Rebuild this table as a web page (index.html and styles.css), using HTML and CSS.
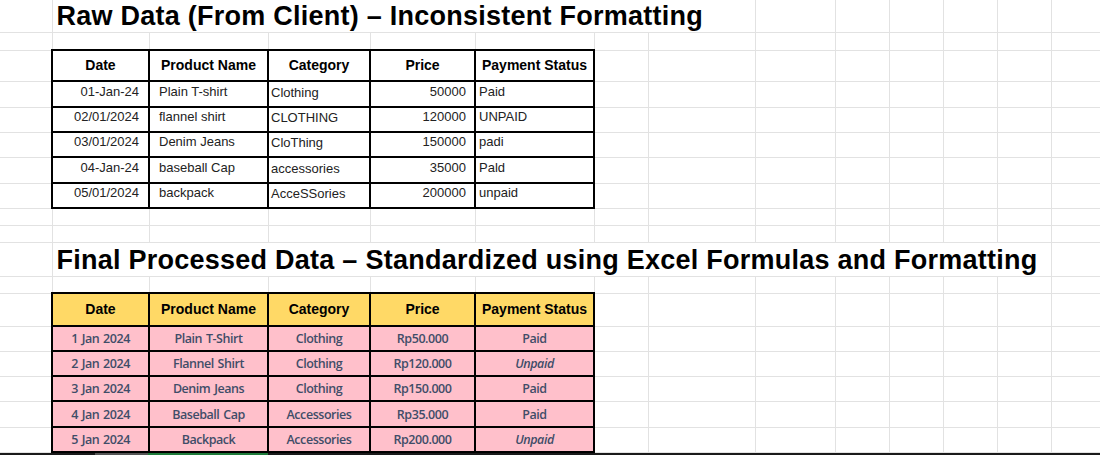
FILE: index.html
```html
<!DOCTYPE html>
<html>
<head>
<meta charset="utf-8">
<title>Sheet</title>
<link rel="stylesheet" href="styles.css">
</head>
<body>
<div class="sheet-wrap">
<table class="sheet">
<colgroup>
<col class="c-a"><col class="c-b"><col class="c-c"><col class="c-d"><col class="c-e"><col class="c-f"><col class="c-g"><col class="c-h"><col class="c-i"><col class="c-j"><col class="c-k"><col class="c-l"><col class="c-m"><col class="c-n">
</colgroup>
<tr class="h32"><td></td><td class="title" colspan="7">Raw Data (From Client) – Inconsistent Formatting</td><td></td><td></td><td></td><td></td><td></td><td></td></tr>
<tr class="h18"><td></td><td></td><td></td><td></td><td></td><td></td><td></td><td></td><td></td><td></td><td></td><td></td><td></td><td></td></tr>
<tr class="h31"><td></td><td class="raw-h">Date</td><td class="raw-h">Product Name</td><td class="raw-h">Category</td><td class="raw-h">Price</td><td class="raw-h">Payment Status</td><td></td><td></td><td></td><td></td><td></td><td></td><td></td><td></td></tr>
<tr class="h26"><td></td><td class="raw date">01-Jan-24</td><td class="raw prod">Plain T-shirt</td><td class="raw cat">Clothing</td><td class="raw price">50000</td><td class="raw pay">Paid</td><td></td><td></td><td></td><td></td><td></td><td></td><td></td><td></td></tr>
<tr class="h25"><td></td><td class="raw date">02/01/2024</td><td class="raw prod">flannel shirt</td><td class="raw cat">CLOTHING</td><td class="raw price">120000</td><td class="raw pay">UNPAID</td><td></td><td></td><td></td><td></td><td></td><td></td><td></td><td></td></tr>
<tr class="h25"><td></td><td class="raw date">03/01/2024</td><td class="raw prod">Denim Jeans</td><td class="raw cat">CloThing</td><td class="raw price">150000</td><td class="raw pay">padi</td><td></td><td></td><td></td><td></td><td></td><td></td><td></td><td></td></tr>
<tr class="h26"><td></td><td class="raw date">04-Jan-24</td><td class="raw prod">baseball Cap</td><td class="raw cat">accessories</td><td class="raw price">35000</td><td class="raw pay">Pald</td><td></td><td></td><td></td><td></td><td></td><td></td><td></td><td></td></tr>
<tr class="h25"><td></td><td class="raw date">05/01/2024</td><td class="raw prod">backpack</td><td class="raw cat">AcceSSories</td><td class="raw price">200000</td><td class="raw pay">unpaid</td><td></td><td></td><td></td><td></td><td></td><td></td><td></td><td></td></tr>
<tr class="h17"><td></td><td></td><td></td><td></td><td></td><td></td><td></td><td></td><td></td><td></td><td></td><td></td><td></td><td></td></tr>
<tr class="h17"><td></td><td></td><td></td><td></td><td></td><td></td><td></td><td></td><td></td><td></td><td></td><td></td><td></td><td></td></tr>
<tr class="h34"><td></td><td class="title" colspan="12">Final Processed Data – Standardized using Excel Formulas and Formatting</td><td></td></tr>
<tr class="h17"><td></td><td></td><td></td><td></td><td></td><td></td><td></td><td></td><td></td><td></td><td></td><td></td><td></td><td></td></tr>
<tr class="h33"><td></td><td class="fin-h">Date</td><td class="fin-h">Product Name</td><td class="fin-h">Category</td><td class="fin-h">Price</td><td class="fin-h">Payment Status</td><td></td><td></td><td></td><td></td><td></td><td></td><td></td><td></td></tr>
<tr class="h25"><td></td><td class="fin">1 Jan 2024</td><td class="fin">Plain T-Shirt</td><td class="fin">Clothing</td><td class="fin">Rp50.000</td><td class="fin">Paid</td><td></td><td></td><td></td><td></td><td></td><td></td><td></td><td></td></tr>
<tr class="h25"><td></td><td class="fin">2 Jan 2024</td><td class="fin">Flannel Shirt</td><td class="fin">Clothing</td><td class="fin">Rp120.000</td><td class="fin unpaid">Unpaid</td><td></td><td></td><td></td><td></td><td></td><td></td><td></td><td></td></tr>
<tr class="h25"><td></td><td class="fin">3 Jan 2024</td><td class="fin">Denim Jeans</td><td class="fin">Clothing</td><td class="fin">Rp150.000</td><td class="fin">Paid</td><td></td><td></td><td></td><td></td><td></td><td></td><td></td><td></td></tr>
<tr class="h26"><td></td><td class="fin">4 Jan 2024</td><td class="fin">Baseball Cap</td><td class="fin">Accessories</td><td class="fin">Rp35.000</td><td class="fin">Paid</td><td></td><td></td><td></td><td></td><td></td><td></td><td></td><td></td></tr>
<tr class="h25"><td></td><td class="fin">5 Jan 2024</td><td class="fin">Backpack</td><td class="fin">Accessories</td><td class="fin">Rp200.000</td><td class="fin unpaid">Unpaid</td><td></td><td></td><td></td><td></td><td></td><td></td><td></td><td></td></tr>
<tr class="h30"><td></td><td></td><td></td><td></td><td></td><td></td><td></td><td></td><td></td><td></td><td></td><td></td><td></td><td></td></tr>
</table>
</div>
<div class="bottom-bar"><span class="seg-dark1"></span><span class="seg-gap"></span><span class="seg-green"></span><span class="seg-dark2"></span></div>
</body>
</html>
```
FILE: styles.css
```css
html, body {
  margin: 0;
  padding: 0;
  background: #ffffff;
  overflow: hidden;
}
body {
  font-family: "Liberation Sans", Arial, sans-serif;
  width: 1100px;
  height: 455px;
}
.sheet-wrap {
  height: 453px;
  overflow: hidden;
}
.sheet {
  border-collapse: collapse;
  table-layout: fixed;
  width: 1121px;
}
.c-a { width: 52px; }
.c-b { width: 97px; }
.c-c { width: 119px; }
.c-d { width: 102px; }
.c-e { width: 105px; }
.c-f { width: 119px; }
.c-g { width: 54px; }
.c-h { width: 107px; }
.c-i { width: 80px; }
.c-j { width: 54px; }
.c-k { width: 54px; }
.c-l { width: 54px; }
.c-m { width: 54px; }
.c-n { width: 70px; }

.sheet td {
  border: 1px solid #e2e2e2;
  padding: 0;
  white-space: nowrap;
  overflow: visible;
  font-size: 13px;
  line-height: 15px;
  color: #222;
}
.sheet tr:first-child td { border-top-style: none; }
.sheet td:first-child { border-left-style: none; }

.h17 { height: 17px; }
.h18 { height: 18px; }
.h25 { height: 25px; }
.h26 { height: 26px; }
.h30 { height: 30px; }
.h31 { height: 31px; }
.h32 { height: 32px; }
.h33 { height: 33px; }
.h34 { height: 34px; }

.sheet td.title {
  font-weight: bold;
  font-size: 27px;
  line-height: normal;
  letter-spacing: 0.25px;
  color: #000;
  vertical-align: bottom;
  padding-left: 4px;
}

.sheet td.raw-h,
.sheet td.fin-h {
  border: 2px solid #000;
  font-weight: bold;
  font-size: 14px;
  color: #000;
  text-align: center;
  vertical-align: middle;
}
.sheet td.fin-h { background: #ffd966; }

.sheet td.raw {
  border: 2px solid #000;
  vertical-align: middle;
  padding-bottom: 6px;
  color: #222;
}
.sheet td.date { text-align: right; padding-right: 9px; }
.sheet td.prod { padding-left: 9px; }
.sheet td.cat { padding-left: 2px; padding-bottom: 4px; }
.sheet td.price { text-align: right; padding-right: 8px; }
.sheet td.pay { padding-left: 3px; }

.sheet td.fin {
  border: 2px solid #000;
  background: #ffc0cb;
  color: #3f4d68;
  font-family: "Open Sans", Lato, sans-serif;
  font-weight: 600;
  font-size: 12.5px;
  letter-spacing: -0.45px;
  word-spacing: 1px;
  text-align: center;
  vertical-align: middle;
}
.sheet td.unpaid { font-style: italic; }

.bottom-bar {
  display: flex;
  height: 2px;
}
.seg-dark1 { width: 95px; background: #1a1a1a; }
.seg-gap { width: 53px; background: #555; }
.seg-green { width: 120px; background: #1e7b3a; }
.seg-dark2 { flex: 1; background: #1a1a1a; }
```
